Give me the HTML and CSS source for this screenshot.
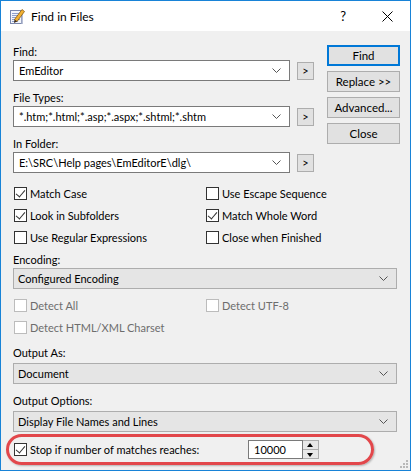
FILE: index.html
```html
<!DOCTYPE html>
<html>
<head>
	<title>Find in Files</title>
	<meta charset="utf-8">
	<link rel="stylesheet" href="styles.css">
</head>
<body>
	<div class="window">
		<div class="titlebar">
			<svg class="app-icon" width="16" height="16" viewBox="0 0 16 16">
				<rect x="1.5" y="1.5" width="11" height="13" fill="#f3f5fb" stroke="#7b88ad"/>
				<rect x="12.5" y="3" width="1.5" height="12" fill="#b9c0d6"/>
				<line x1="3" y1="4.5" x2="11" y2="4.5" stroke="#8fa0cc"/>
				<line x1="3" y1="6.5" x2="11" y2="6.5" stroke="#8fa0cc"/>
				<line x1="3" y1="8.5" x2="11" y2="8.5" stroke="#8fa0cc"/>
				<line x1="3" y1="10.5" x2="11" y2="10.5" stroke="#8fa0cc"/>
				<line x1="3" y1="12.5" x2="9" y2="12.5" stroke="#8fa0cc"/>
				<polygon points="13,0.5 15.5,2.5 8,12.5 5.5,10.5" fill="#f2b233" stroke="#8a5a12" stroke-width="0.8"/>
				<polygon points="5.5,10.5 8,12.5 5,14" fill="#3a2a1a"/>
			</svg>
			<span class="title">Find in Files</span>
			<span class="help">?</span>
			<svg class="close-x" width="11" height="11" viewBox="0 0 11 11">
				<path d="M0.5 0.5 L10.5 10.5 M10.5 0.5 L0.5 10.5" stroke="#000" stroke-width="1"/>
			</svg>
		</div>

		<div class="client">
			<div class="top">
				<div class="fields">
					<div class="field">
						<div class="label">Find:</div>
						<div class="combo-row">
							<div class="combo"><span>EmEditor</span><svg class="chev" width="9" height="5" viewBox="0 0 9 5"><path d="M0.5 0.5 L4.5 4.5 L8.5 0.5" fill="none" stroke="#555"/></svg></div>
							<div class="more">&gt;</div>
						</div>
					</div>
					<div class="field">
						<div class="label">File Types:</div>
						<div class="combo-row">
							<div class="combo"><span>*.htm;*.html;*.asp;*.aspx;*.shtml;*.shtm</span><svg class="chev" width="9" height="5" viewBox="0 0 9 5"><path d="M0.5 0.5 L4.5 4.5 L8.5 0.5" fill="none" stroke="#555"/></svg></div>
							<div class="more">&gt;</div>
						</div>
					</div>
					<div class="field">
						<div class="label">In Folder:</div>
						<div class="combo-row">
							<div class="combo"><span>E:\SRC\Help pages\EmEditorE\dlg\</span><svg class="chev" width="9" height="5" viewBox="0 0 9 5"><path d="M0.5 0.5 L4.5 4.5 L8.5 0.5" fill="none" stroke="#555"/></svg></div>
							<div class="more">&gt;</div>
						</div>
					</div>
				</div>
				<div class="buttons">
					<div class="btn default">Find</div>
					<div class="btn">Replace &gt;&gt;</div>
					<div class="btn">Advanced...</div>
					<div class="btn">Close</div>
				</div>
			</div>

			<div class="checks">
				<div class="check on"><span class="box"></span>Match Case</div>
				<div class="check"><span class="box"></span>Use Escape Sequence</div>
				<div class="check on"><span class="box"></span>Look in Subfolders</div>
				<div class="check on"><span class="box"></span>Match Whole Word</div>
				<div class="check"><span class="box"></span>Use Regular Expressions</div>
				<div class="check"><span class="box"></span>Close when Finished</div>
			</div>

			<div class="label enc">Encoding:</div>
			<div class="dropdown"><span>Configured Encoding</span><svg class="chev" width="9" height="5" viewBox="0 0 9 5"><path d="M0.5 0.5 L4.5 4.5 L8.5 0.5" fill="none" stroke="#555"/></svg></div>

			<div class="checks disabled">
				<div class="check"><span class="box"></span>Detect All</div>
				<div class="check"><span class="box"></span>Detect UTF-8</div>
				<div class="check"><span class="box"></span>Detect HTML/XML Charset</div>
			</div>

			<div class="label out-as">Output As:</div>
			<div class="dropdown"><span>Document</span><svg class="chev" width="9" height="5" viewBox="0 0 9 5"><path d="M0.5 0.5 L4.5 4.5 L8.5 0.5" fill="none" stroke="#555"/></svg></div>

			<div class="label out-opt">Output Options:</div>
			<div class="dropdown"><span>Display File Names and Lines</span><svg class="chev" width="9" height="5" viewBox="0 0 9 5"><path d="M0.5 0.5 L4.5 4.5 L8.5 0.5" fill="none" stroke="#555"/></svg></div>

			<div class="stop-row">
				<div class="check on"><span class="box"></span>Stop if number of matches reaches:</div>
				<div class="spin">
					<div class="spin-input">10000</div>
					<div class="spin-btns">
						<span class="up"></span>
						<span class="down"></span>
					</div>
				</div>
			</div>

			<span class="ring"></span>
			<svg class="grip" width="8" height="8" viewBox="0 0 8 8">
				<rect x="6" y="0" width="2" height="2" fill="#b8b8b8"/>
				<rect x="3" y="3" width="2" height="2" fill="#b8b8b8"/>
				<rect x="6" y="3" width="2" height="2" fill="#b8b8b8"/>
				<rect x="0" y="6" width="2" height="2" fill="#b8b8b8"/>
				<rect x="3" y="6" width="2" height="2" fill="#b8b8b8"/>
				<rect x="6" y="6" width="2" height="2" fill="#b8b8b8"/>
			</svg>
		</div>
	</div>
</body>
</html>
```

FILE: styles.css
```css
*{margin: 0;padding: 0;box-sizing: border-box;}
html,body{background: #fff;}
body{font-family: Lato, "Noto Sans", "Liberation Sans", sans-serif;font-size: 11px;color: #000;}

.window{width: 411px;height: 471px;border: 1px solid #1883d7;display: flex;flex-direction: column;}

/* title bar */
.titlebar{height: 30px;background: #fff;display: flex;align-items: center;padding-left: 8px;}
.app-icon{margin-top: 1px;}
.title{margin-left: 6px;font-size: 12px;flex: 1;}
.help{font-size: 13px;margin-right: 36px;}
.close-x{margin-right: 17px;}

/* client area */
.client{flex: 1;background: #f0f0f0;padding: 0 12px;position: relative;}
.label{height: 16px;line-height: 16px;}

.top{display: flex;}
.fields{width: 301px;padding-top: 13px;}
.field{margin-bottom: 9px;}
.combo-row{display: flex;align-items: center;height: 21px;}
.combo{width: 277px;height: 21px;background: #fff;border: 1px solid #7a7a7a;display: flex;align-items: center;padding-left: 5px;}
.combo span{flex: 1;white-space: nowrap;overflow: hidden;}
.chev{margin: 0 8px 0 6px;flex: none;}
.more{width: 17px;height: 18px;margin-left: 7px;background: #e1e1e1;border: 1px solid #adadad;font-size: 11px;line-height: 15px;text-align: center;}

.buttons{margin-left: 13px;padding-top: 14px;display: flex;flex-direction: column;gap: 5px;}
.btn{width: 73px;height: 21px;background: #e1e1e1;border: 1px solid #adadad;text-align: center;line-height: 19px;font-size: 11.5px;}
.btn.default{border: 2px solid #0078d7;line-height: 17px;}

/* checkboxes */
.checks{display: grid;grid-template-columns: 192px 192px;padding-left: 1px;}
.check{height: 22px;display: flex;align-items: center;white-space: nowrap;}
.box{width: 13px;height: 13px;border: 1px solid #333;background: #fff;margin-right: 3px;position: relative;flex: none;}
.check.on .box::after{content: "";position: absolute;left: 3px;top: 0px;width: 4px;height: 8px;border: solid #333;border-width: 0 1px 1px 0;transform: rotate(40deg);}
.checks.disabled{margin-top: 5px;color: #6d6d6d;}
.checks.disabled .box{border-color: #bcbcbc;}

.enc{margin-top: 4px;}
.dropdown{width: 384px;height: 21px;background: #e5e5e5;border: 1px solid #adadad;display: flex;align-items: center;padding-left: 4px;}
.dropdown span{flex: 1;}
.out-as{margin-top: 7px;margin-bottom: 2px;}
.out-opt{margin-top: 9px;margin-bottom: 2px;}

/* stop row */
.stop-row{display: flex;align-items: center;height: 22px;margin-top: 6px;padding-left: 1px;}
.stop-row .check{width: 234px;}
.spin{display: flex;height: 19px;}
.spin-input{width: 55px;height: 19px;background: #fff;border: 1px solid #7a7a7a;padding-left: 5px;line-height: 17px;}
.spin-btns{width: 16px;height: 19px;display: flex;flex-direction: column;background: #e8e8e8;border: 1px solid #adadad;border-left: none;}
.spin-btns span{flex: 1;position: relative;}
.spin-btns .up{border-bottom: 1px solid #adadad;}
.spin-btns .up::after{content: "";position: absolute;left: 4px;top: 2px;border: 3px solid transparent;border-bottom: 4px solid #000;border-top: none;}
.spin-btns .down::after{content: "";position: absolute;left: 4px;top: 3px;border: 3px solid transparent;border-top: 4px solid #000;border-bottom: none;}

/* annotation + size grip */
.ring{position: absolute;left: 5px;top: 403px;width: 368px;height: 31px;border: 3px solid #e2474b;border-radius: 16px;box-shadow: 1px 1px 2px rgba(0,0,0,0.25);}
.grip{position: absolute;right: 2px;bottom: 2px;}
```
